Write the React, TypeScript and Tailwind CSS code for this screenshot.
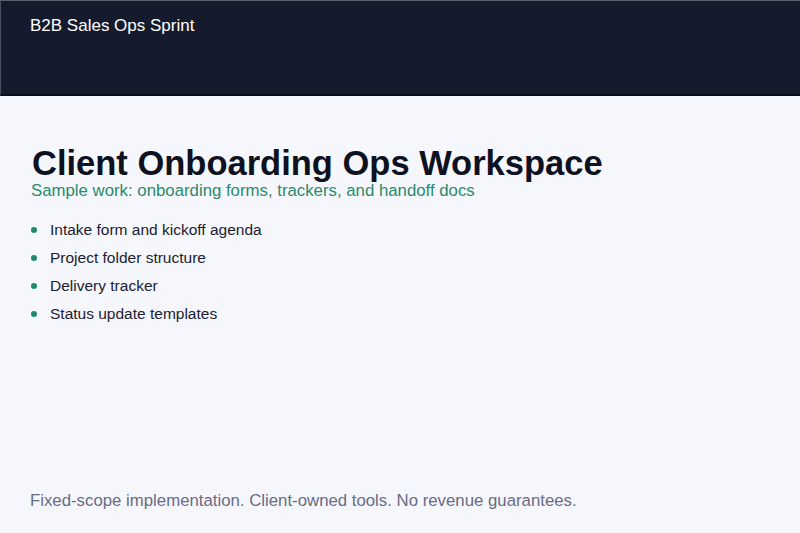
import React from "react";

export default function App() {
  const items = [
    "Intake form and kickoff agenda",
    "Project folder structure",
    "Delivery tracker",
    "Status update templates",
  ];
  return (
    <div
      className="flex h-[533px] w-full flex-col bg-[#f6f7fc]"
      style={{ fontFamily: '"Liberation Sans", Arial, sans-serif' }}
    >
      <header className="h-[96px] shrink-0 border-t border-l border-t-[#5c5f6b] border-l-[#4a4e5c] border-b-2 border-b-[#0a0e1a] bg-[#151b2c] pl-[29px] pt-[15px]">
        <div className="text-[17px] leading-[20px] text-white">B2B Sales Ops Sprint</div>
      </header>
      <main className="flex-1 px-[30px] pt-[49px]">
        <h1 className="pl-[2px] text-[34.5px] font-bold leading-[36px] text-[#0d1120]">
          Client Onboarding Ops Workspace
        </h1>
        <p className="pl-[1px] text-[16.8px] leading-[20px] text-[#2a8a6b]">
          Sample work: onboarding forms, trackers, and handoff docs
        </p>
        <ul className="mt-[15px]">
          {items.map((t) => (
            <li key={t} className="flex h-[28px] items-center text-[15.5px] leading-[28px] text-[#1d2030]">
              <span className="ml-[1px] mr-[13px] h-[6px] w-[6px] shrink-0 rounded-full bg-[#1d8a68]" />
              <span>{t}</span>
            </li>
          ))}
        </ul>
      </main>
      <footer className="shrink-0 px-[30px] pb-[22px] text-[16.8px] leading-[20px] text-[#6a6b84]">
        Fixed-scope implementation. Client-owned tools. No revenue guarantees.
      </footer>
    </div>
  );
}
